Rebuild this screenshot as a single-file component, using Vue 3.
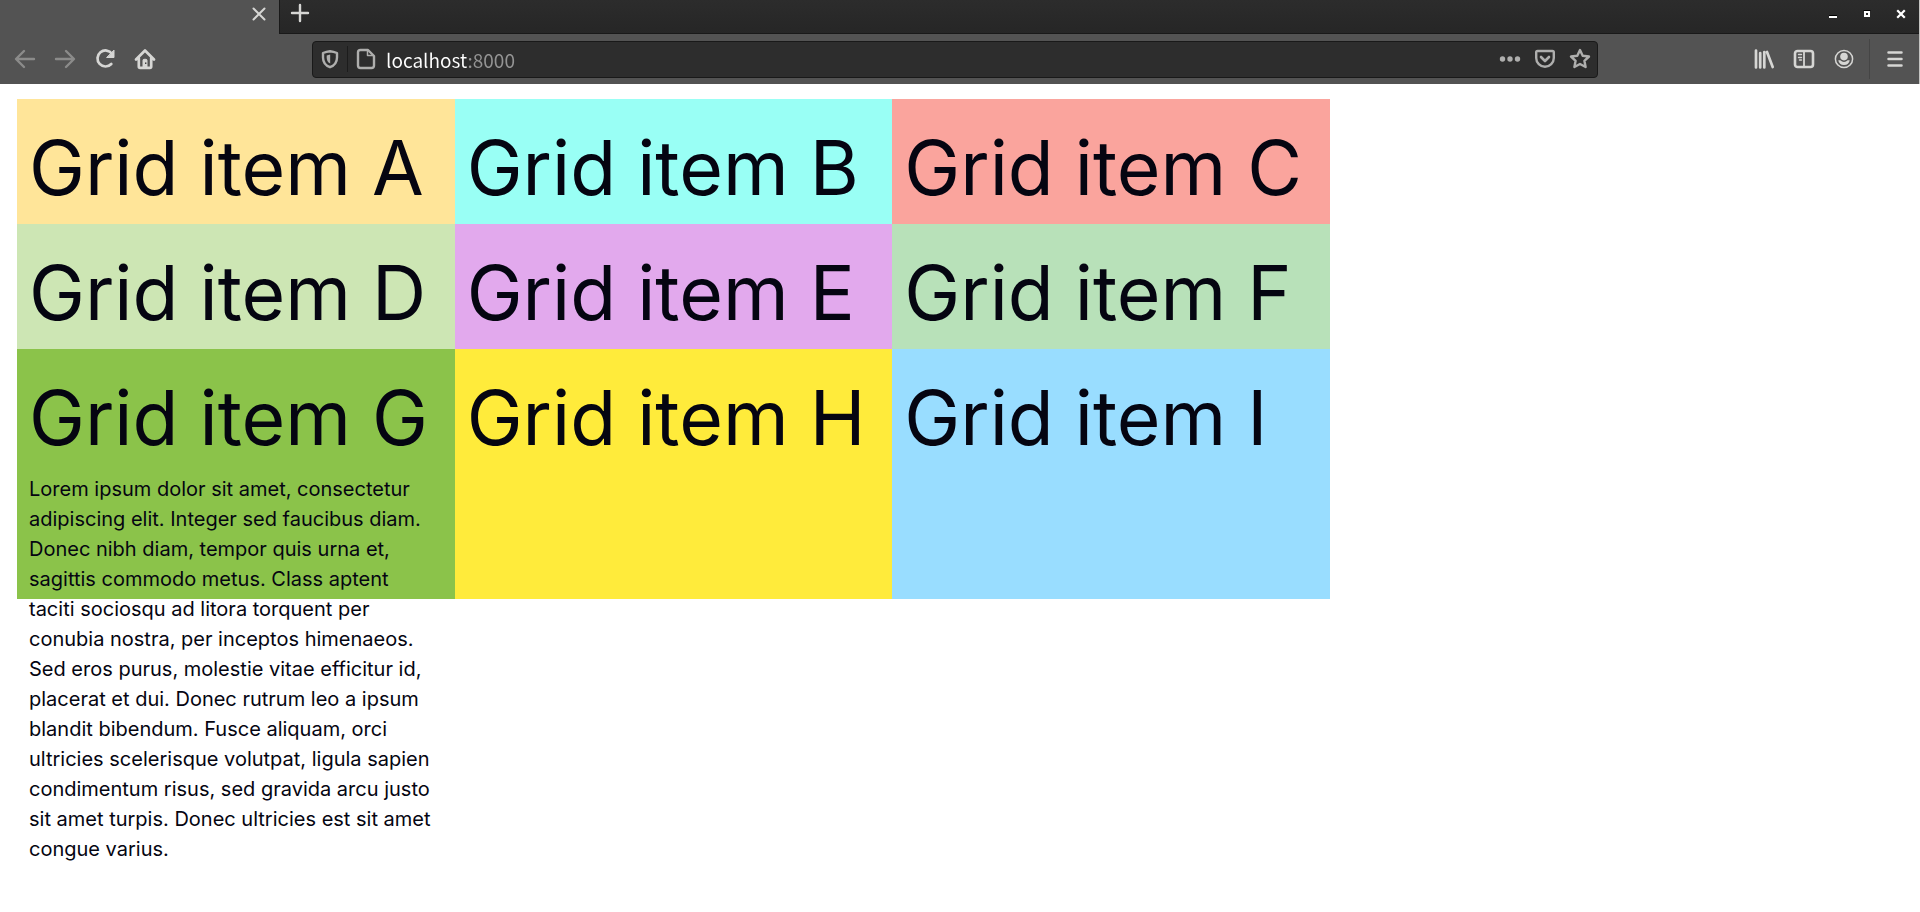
<script setup>
import { ref } from 'vue'

const address = ref('localhost:8000')
const items = ['A', 'B', 'C', 'D', 'E', 'F', 'G', 'H', 'I']
const lorem =
  'Lorem ipsum dolor sit amet, consectetur adipiscing elit. Integer sed faucibus diam. Donec nibh diam, tempor quis urna et, sagittis commodo metus. Class aptent taciti sociosqu ad litora torquent per conubia nostra, per inceptos himenaeos. Sed eros purus, molestie vitae efficitur id, placerat et dui. Donec rutrum leo a ipsum blandit bibendum. Fusce aliquam, orci ultricies scelerisque volutpat, ligula sapien condimentum risus, sed gravida arcu justo sit amet turpis. Donec ultricies est sit amet congue varius.'
</script>

<template>
  <div class="window">
    <header class="chrome">
      <div class="tabs">
        <div class="tab">
          <button class="tab-close" aria-label="Close tab">
            <svg width="14" height="14" viewBox="0 0 14 14"><path d="M1.500 1.500l11 11M12.500 1.500l-11 11" stroke-width="2" /></svg>
          </button>
        </div>
        <button class="new-tab" aria-label="New tab">
          <svg width="20" height="20" viewBox="0 0 20 20"><path d="M10 2v16M2 10h16" stroke-width="2.4" /></svg>
        </button>
        <div class="controls">
          <button aria-label="Minimize">
            <svg width="10" height="10" viewBox="0 0 10 10"><path d="M1 7.5h8" stroke="#000" stroke-width="3" stroke-linecap="butt" /><path d="M1 8h8" stroke="#fff" stroke-width="2" stroke-linecap="butt" /></svg>
          </button>
          <button aria-label="Maximize">
            <svg width="10" height="10" viewBox="0 0 10 10"><path d="M2 1.5h6" stroke="#000" stroke-width="1" /><path d="M3 3h4v4H3z" stroke="#fff" stroke-width="2" stroke-linejoin="miter" /></svg>
          </button>
          <button aria-label="Close window">
            <svg width="10" height="10" viewBox="0 0 10 10"><path d="M2 2l6 6M8 2L2 8" stroke="#fff" stroke-width="2.2" stroke-linecap="square" /></svg>
          </button>
        </div>
      </div>

      <nav class="toolbar" aria-label="Browser toolbar">
        <div class="group nav-group">
          <button class="dim" aria-label="Back">
            <svg width="22" height="22" viewBox="0 0 22 22"><path d="M20 11H2.5M10 3l-8 8 8 8" stroke-width="2.4" /></svg>
          </button>
          <button class="dim" aria-label="Forward">
            <svg width="22" height="22" viewBox="0 0 22 22"><path d="M2 11h17.500M12 3l8 8-8 8" stroke-width="2.4" /></svg>
          </button>
          <button aria-label="Reload">
            <svg width="22" height="22" viewBox="0 0 22 22"><path d="M18 5.800A8 8 0 1 0 17.300 16" stroke-width="2.700" /><path d="M20 2.500v7h-7z" fill="currentColor" stroke-width="1" /></svg>
          </button>
          <button aria-label="Home">
            <svg width="22" height="22" viewBox="0 0 22 22"><path d="M2 11.500L11 2.500l9 9M4.800 10v8.500q0 1.300 1.300 1.300h9.800q1.300 0 1.300-1.300V10" stroke-width="2.700" /><path d="M9 19.500v-7.200q0-1 1-1h2q1 0 1 1v7.200z" fill="currentColor" stroke-width="1" /><rect x="11" y="14.500" width="1.400" height="1.400" fill="#333" stroke="none" /></svg>
          </button>
        </div>

        <div class="urlbar">
          <button class="shield" aria-label="Tracking protection">
            <svg width="20" height="20" viewBox="0 0 20 20"><path d="M10 2.200Q13.500 2.600 17 4v4.500c0 4.500-2.500 8-7 9.700-4.500-1.700-7-5.200-7-9.700V4Q6.500 2.600 10 2.200z" stroke-width="2.400" /><path d="M10.200 5.500v9C7.500 13.200 6.700 10.800 6.700 8.700V6.500z" fill="currentColor" stroke="none" /></svg>
          </button>
          <button class="page-info" aria-label="Site information">
            <svg width="22" height="22" viewBox="0 0 22 22"><path d="M5.500 2H13l6 6v9.500q0 2.500-2.500 2.500h-11Q3 20 3 17.500v-13Q3 2 5.500 2z" stroke-width="2.400" /><path d="M12.500 2v5.500H18" stroke-width="1.500" /></svg>
          </button>
          <input v-model="address" class="address" type="text" aria-label="Address" spellcheck="false" />
          <button aria-label="Page actions">
            <svg width="22" height="22" viewBox="0 0 22 22"><g fill="currentColor" stroke="none"><circle cx="3.500" cy="11" r="2.700" /><circle cx="11" cy="11" r="2.700" /><circle cx="18.500" cy="11" r="2.700" /></g></svg>
          </button>
          <button aria-label="Save to Pocket">
            <svg width="22" height="22" viewBox="0 0 22 22"><path d="M3.500 3h15q1.300 0 1.300 1.300V10a8.800 8.800 0 0 1-17.600 0V4.300Q2.200 3 3.500 3z" stroke-width="2.400" /><path d="M7 9l4 4 4-4" stroke-width="2.600" /></svg>
          </button>
          <button aria-label="Bookmark this page">
            <svg width="22" height="22" viewBox="0 0 22 22"><path d="M11 2l2.700 5.700 6.300.8-4.600 4.300 1.200 6.200L11 16l-5.600 3 1.200-6.200L2 8.500l6.300-.8z" stroke-width="2.400" /></svg>
          </button>
        </div>

        <div class="group">
          <button aria-label="Library">
            <svg width="22" height="22" viewBox="0 0 22 22"><path d="M3 2.500v17M7.200 5v14.500M11.300 4v15.500M14 4l5.700 15" stroke-width="2.700" /></svg>
          </button>
          <button aria-label="Sidebars">
            <svg width="22" height="22" viewBox="0 0 22 22"><rect x="2" y="3" width="18" height="16" rx="2.500" stroke-width="2.600" /><path d="M11 3v16" stroke-width="1.800" /><path d="M5.500 6.500h3M5.500 9.500h3M6.500 12h2" stroke-width="1.400" /></svg>
          </button>
          <button aria-label="Account">
            <svg width="22" height="22" viewBox="0 0 22 22"><circle cx="11" cy="11" r="8.600" stroke-width="1.500" /><circle cx="11" cy="8.600" r="3.800" fill="currentColor" stroke="none" /><path d="M5.300 12.300h2Q9 14 11 14t3.700-1.700h2Q16 17 11 17t-5.700-4.700z" fill="currentColor" stroke="none" /></svg>
          </button>
          <button class="menu" aria-label="Menu">
            <svg width="22" height="22" viewBox="0 0 22 22"><path d="M4.500 4.500h13M4.500 11h13M4.500 17.500h13" stroke-width="2.500" /></svg>
          </button>
        </div>
      </nav>
    </header>

    <main class="page">
      <div class="grid">
        <section v-for="item in items" :key="item" class="cell" :class="'cell-' + item.toLowerCase()">
          <h1>Grid item {{ item }}</h1>
          <p v-if="item === 'G'">{{ lorem }}</p>
        </section>
      </div>
    </main>
  </div>
</template>

<style>
body {
  background: #fff;
}
</style>

<style scoped>
.window {
  min-height: 100vh;
}
.chrome {
  border-right: 1px solid #c4c4c2;
  color: #d6d6d4;
}
button {
  display: flex;
  align-items: center;
  justify-content: center;
  padding: 0;
  border: 0;
  background: none;
  color: inherit;
}
svg {
  display: block;
  fill: none;
  stroke: currentColor;
  stroke-linecap: round;
  stroke-linejoin: round;
}
.tabs {
  display: flex;
  height: 34px;
  background: linear-gradient(#2c2c2c, #262626);
  box-sizing: border-box;
  box-shadow: inset 0 -1px #191919;
}
.tab {
  display: flex;
  justify-content: flex-end;
  width: 279px;
  background: #535353;
  border-right: 1px solid #191919;
}
.tab-close {
  width: 41px;
  height: 28px;
}
.new-tab {
  width: 40px;
  height: 26px;
}
.controls {
  display: flex;
  height: 28px;
  margin-left: auto;
  padding-right: 1px;
}
.controls button {
  width: 34px;
}
.toolbar {
  display: flex;
  align-items: center;
  height: 50px;
  background: #535353;
}
.group {
  display: flex;
  align-items: center;
}
.group button {
  width: 40px;
  height: 40px;
}
.nav-group {
  padding-left: 5px;
}
.group .dim {
  color: #8b8b8a;
}
.group .menu {
  width: 50px;
  margin-left: 5px;
  border-left: 1px solid #454545;
}
.urlbar {
  display: flex;
  flex: 1;
  align-items: center;
  height: 37px;
  box-sizing: border-box;
  margin: 0 146px 0 147px;
  border: 1px solid #191919;
  border-radius: 4px;
  background: #2d2d2d;
  color: #aeaead;
}
.urlbar button {
  width: 35px;
  height: 26px;
}
.urlbar .shield {
  border-right: 1px solid #1c1c1c;
}
.address {
  flex: 1;
  min-width: 0;
  height: 34px;
  padding: 0 0 0 3px;
  border: 0;
  outline: 0;
  font: 19px "Noto Sans CJK SC", "Noto Sans", sans-serif;
  color: transparent;
  caret-color: #fff;
  /* host in white, port in grey */
  background: linear-gradient(90deg, #fff 84px, #949494 84px);
  background-clip: text;
}
.page {
  padding: 15px 16px 0 17px;
  font-family: Inter, sans-serif;
  color: #050511;
}
.grid {
  display: grid;
  grid-template-columns: repeat(3, 1fr);
  grid-template-rows: 125px 125px 250px;
  max-width: 1313px;
}
.cell {
  box-sizing: border-box;
  min-width: 0;
  padding: 13px 20px 0 12px;
}
h1 {
  margin: 0;
  font-size: 75px;
  font-weight: 400;
  line-height: 112px;
  white-space: nowrap;
}
p {
  margin: 0;
  font-size: 20px;
  line-height: 30px;
}
.cell-a { background: #ffe599; }
.cell-b { background: #99fff5; }
.cell-c { background: #faa49d; }
.cell-d { background: #cde6b4; }
.cell-e { background: #e2a9ed; }
.cell-f { background: #b8e1b9; }
.cell-g { background: #8bc34a; }
.cell-h { background: #ffeb3b; }
.cell-i { background: #99ddff; }
</style>
